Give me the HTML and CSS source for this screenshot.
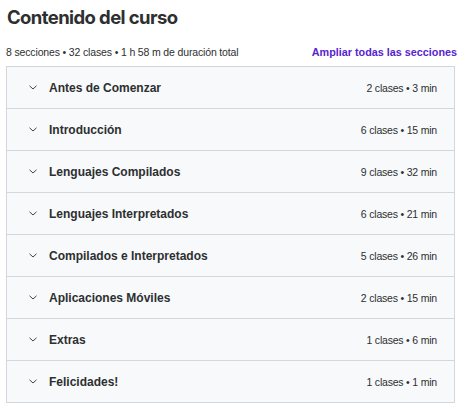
FILE: index.html
```html
<!DOCTYPE html>
<html lang="es">
<head>
<meta charset="utf-8">
<link rel="stylesheet" href="styles.css">
</head>
<body>
<div class="page">
  <h2 class="title">Contenido del curso</h2>
  <div class="summary">
    <span class="stats">8 secciones • 32 clases • 1 h 58 m de duración total</span>
    <a class="expand">Ampliar todas las secciones</a>
  </div>
  <div class="sections">
    <div class="row"><svg class="chev" viewBox="0 0 8 5"><path d="M0.5 0.8 L4 4 L7.5 0.8"/></svg><span class="name">Antes de Comenzar</span><span class="meta">2 clases • 3 min</span></div>
    <div class="row"><svg class="chev" viewBox="0 0 8 5"><path d="M0.5 0.8 L4 4 L7.5 0.8"/></svg><span class="name">Introducción</span><span class="meta">6 clases • 15 min</span></div>
    <div class="row"><svg class="chev" viewBox="0 0 8 5"><path d="M0.5 0.8 L4 4 L7.5 0.8"/></svg><span class="name">Lenguajes Compilados</span><span class="meta">9 clases • 32 min</span></div>
    <div class="row"><svg class="chev" viewBox="0 0 8 5"><path d="M0.5 0.8 L4 4 L7.5 0.8"/></svg><span class="name">Lenguajes Interpretados</span><span class="meta">6 clases • 21 min</span></div>
    <div class="row"><svg class="chev" viewBox="0 0 8 5"><path d="M0.5 0.8 L4 4 L7.5 0.8"/></svg><span class="name">Compilados e Interpretados</span><span class="meta">5 clases • 26 min</span></div>
    <div class="row"><svg class="chev" viewBox="0 0 8 5"><path d="M0.5 0.8 L4 4 L7.5 0.8"/></svg><span class="name">Aplicaciones Móviles</span><span class="meta">2 clases • 15 min</span></div>
    <div class="row"><svg class="chev" viewBox="0 0 8 5"><path d="M0.5 0.8 L4 4 L7.5 0.8"/></svg><span class="name">Extras</span><span class="meta">1 clases • 6 min</span></div>
    <div class="row"><svg class="chev" viewBox="0 0 8 5"><path d="M0.5 0.8 L4 4 L7.5 0.8"/></svg><span class="name">Felicidades!</span><span class="meta">1 clases • 1 min</span></div>
  </div>
</div>
</body>
</html>
```
FILE: styles.css
```css
html, body {
  margin: 0;
  padding: 0;
  background: #ffffff;
}
body {
  font-family: "Liberation Sans", Arial, sans-serif;
  color: #2d2f31;
}
.page {
  padding: 5px 13px 0 6px;
}
.title {
  margin: 0 0 0 1px;
  font-family: Inter, "Liberation Sans", sans-serif;
  font-size: 18.5px;
  font-weight: 700;
  line-height: 24px;
  letter-spacing: -0.6px;
}
.summary {
  display: flex;
  justify-content: space-between;
  align-items: center;
  margin-top: 16px;
  height: 14px;
  margin-bottom: 7px;
}
.stats {
  font-size: 10.5px;
  letter-spacing: -0.15px;
}
.expand {
  font-size: 10.8px;
  font-weight: 700;
  color: #5624d0;
  margin-right: -2px;
}
.sections {
  border: 1px solid #d1d7dc;
  border-bottom: none;
}
.row {
  display: flex;
  align-items: center;
  height: 41px;
  background: #f7f9fa;
  border-bottom: 1px solid #d1d7dc;
  padding: 0 17px 0 22px;
}
.chev {
  width: 8px;
  height: 5px;
  fill: none;
  stroke: #2d2f31;
  stroke-width: 0.9;
  margin-right: 12px;
}
.name {
  flex: 1;
  font-size: 12px;
  font-weight: 700;
}
.meta {
  font-size: 10.5px;
  letter-spacing: -0.2px;
}
```
